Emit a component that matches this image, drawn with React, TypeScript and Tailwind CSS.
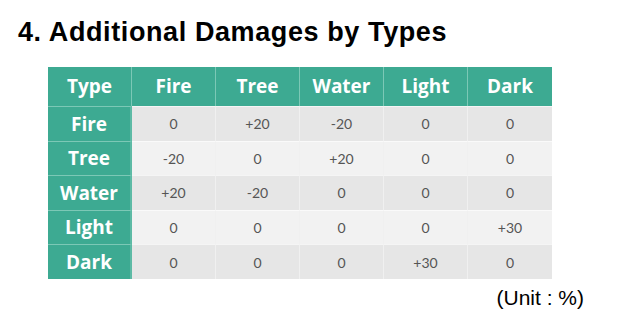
const cols = ["Fire", "Tree", "Water", "Light", "Dark"];

const rows: { type: string; values: string[] }[] = [
  { type: "Fire", values: ["0", "+20", "-20", "0", "0"] },
  { type: "Tree", values: ["-20", "0", "+20", "0", "0"] },
  { type: "Water", values: ["+20", "-20", "0", "0", "0"] },
  { type: "Light", values: ["0", "0", "0", "0", "+30"] },
  { type: "Dark", values: ["0", "0", "0", "+30", "0"] },
];

export default function App() {
  return (
    <div className="w-[618px] h-[323px] bg-white overflow-hidden">
      <h1 className="pl-[18px] pt-[17px] text-[27px] leading-[30px] tracking-[0.6px] font-bold text-black font-['Liberation_Sans',Arial,sans-serif]">
        4. Additional Damages by Types
      </h1>

      <div className="ml-[48px] mt-[20px] w-[504px] grid grid-cols-[84px_84px_84px_84px_84px_84px] font-['Open_Sans',sans-serif]">
        {/* header row */}
        <div className="h-[39px] bg-[#3daa92] flex items-center justify-center text-white text-[19px] font-bold border-r border-[#7cc8b6]">
          Type
        </div>
        {cols.map((c, i) => (
          <div
            key={c}
            className={
              "h-[39px] bg-[#3daa92] flex items-center justify-center text-white text-[19px] font-bold " +
              (i < cols.length - 1 ? "border-r border-[#7cc8b6]" : "")
            }
          >
            {c}
          </div>
        ))}

        {rows.map((r, ri) => (
          <Row key={r.type} type={r.type} values={r.values} odd={ri % 2 === 1} />
        ))}
      </div>

      <div className="w-[584px] text-right mt-[8px] text-[21px] leading-[22px] text-black font-['Liberation_Sans',Arial,sans-serif]">
        (Unit : %)
      </div>
    </div>
  );
}

function Row({ type, values, odd }: { type: string; values: string[]; odd: boolean }) {
  return (
    <>
      <div className="h-[34.6px] bg-[#3daa92] flex items-center justify-center text-white text-[19px] font-bold border-t border-[#7cc8b6] border-r-2 border-r-[#5dbaa5]">
        {type}
      </div>
      {values.map((v, i) => (
        <div
          key={i}
          className={
            "h-[34.6px] flex items-center justify-center text-[14px] text-[#555] font-['Lato',sans-serif] border-t border-white/60 " +
            (odd ? "bg-[#f2f2f2] " : "bg-[#e6e6e6] ") +
            (i < values.length - 1 ? "border-r border-r-[#f0f0f0]" : "")
          }
        >
          {v}
        </div>
      ))}
    </>
  );
}
